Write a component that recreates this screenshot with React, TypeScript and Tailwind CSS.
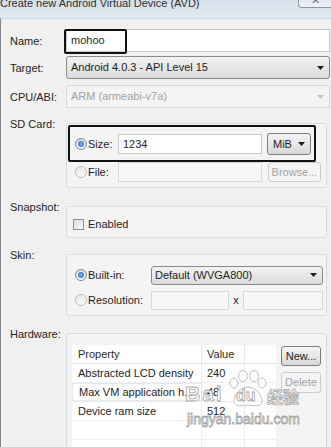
import type { ReactNode } from "react";

function Arrow({ disabled = false }: { disabled?: boolean }) {
    return (
        <svg width="7" height="4" viewBox="0 0 7 4">
            <polygon points="0,0 7,0 3.5,4" fill={disabled ? "#c4c4c4" : "#1e1e1e"} />
        </svg>
    );
}

function Radio({ checked = false }: { checked?: boolean }) {
    return (
        <div
            className={`flex h-[12px] w-[12px] shrink-0 items-center justify-center rounded-full border ${
                checked ? "border-[#7b8894] bg-linear-to-b from-[#dcdcdc] to-[#f9f9f9]" : "border-[#bcbcbc] bg-linear-to-b from-[#e9e9e9] to-[#fbfbfb]"
            }`}
        >
            {checked && <div className="h-[6px] w-[6px] rounded-full bg-radial from-[#7fb6ee] to-[#1b5fb8]" />}
        </div>
    );
}

function Button({ children, disabled = false, className = "" }: { children: ReactNode; disabled?: boolean; className?: string }) {
    return (
        <div
            className={`flex items-center justify-center rounded-[3px] border ${
                disabled
                    ? "border-[#c9cdd0] bg-[#f4f4f4] text-[#a3a3a3]"
                    : "border-[#7c7c7c] bg-linear-to-b from-[#f4f4f4] to-[#d9d9d9] text-[#1e1e1e]"
            } ${className}`}
        >
            {children}
        </div>
    );
}

function Label({ children }: { children: ReactNode }) {
    return <div className="w-[65px] shrink-0 pl-[9px] leading-[14px]">{children}</div>;
}

function Group({ children, className = "" }: { children: ReactNode; className?: string }) {
    return (
        <div className="w-[261px] pt-[6px]">
            <div className={`relative rounded-[3px] border border-[#d6dbe0] bg-[#f4f4f4] ${className}`}>{children}</div>
        </div>
    );
}

const rows = [
    ["Abstracted LCD density", "240"],
    ["Max VM application h...", "48"],
    ["Device ram size", "512"],
    ["", ""],
    ["", ""],
];

const stroke = "text-white [-webkit-text-stroke:0.8px_#9c9c9c]";

export default function App() {
    return (
        <div className="relative h-[447px] w-[331px] overflow-hidden bg-[#f0f0f0] font-['Liberation_Sans',Arial,sans-serif] text-[11px] text-[#1e1e1e]">
            {/* title bar */}
            <div className="flex h-[18px] items-start justify-between overflow-hidden bg-linear-to-b from-[#d6e0eb] to-[#e2e9f1]">
                <span className="-mt-[4px] leading-[14px] text-[#2e2e2e]">Create new Android Virtual Device (AVD)</span>
                <div className="flex h-[8px] w-[33px] justify-center overflow-hidden rounded-bl-[4px] border-b border-l border-[#8c96a2] bg-linear-to-b from-[#e3e9f0] to-[#f1f4f8]">
                    <span className="-mt-[7px] text-[11px] leading-[14px] text-[#66707c]">✕</span>
                </div>
            </div>

            <div className="flex h-[429px] flex-col border-l border-t border-l-[#7f8791] border-t-[#cdd5de]">
                {/* Name */}
                <div className="mt-[10px] flex h-[23px] items-center">
                    <Label>Name:</Label>
                    <div className="relative mr-[1px] flex h-[23px] flex-1 items-center border border-[#c4c9cf] bg-white px-[4px]">
                        mohoo
                        <div className="absolute -left-[3px] -top-[1px] h-[25px] w-[63px] rounded-[2px] border-2 border-[#111]" />
                    </div>
                </div>

                {/* Target */}
                <div className="mt-[4px] flex h-[23px] items-center">
                    <Label>Target:</Label>
                    <div className="mr-[1px] flex h-[23px] flex-1 items-center justify-between rounded-[3px] border border-[#8a8a8a] bg-linear-to-b from-[#f2f2f2] to-[#dcdcdc] pl-[4px] pr-[5px]">
                        <span>Android 4.0.3 - API Level 15</span>
                        <Arrow />
                    </div>
                </div>

                {/* CPU/ABI */}
                <div className="mt-[6px] flex h-[23px] items-center">
                    <Label>CPU/ABI:</Label>
                    <div className="mr-[1px] flex h-[23px] flex-1 items-center justify-between rounded-[2px] border border-[#d9d9d9] bg-[#f4f4f4] pl-[4px] pr-[5px] text-[#a2a2a2]">
                        <span>ARM (armeabi-v7a)</span>
                        <Arrow disabled />
                    </div>
                </div>

                {/* SD Card */}
                <div className="mt-[9px] flex items-start">
                    <Label>SD Card:</Label>
                    <Group className="pb-[5px] pl-[8px] pt-[9px]">
                        <div className="flex h-[22px] items-center">
                            <div className="flex w-[43px] items-center gap-[1px]">
                                <Radio checked />
                                <span>Size:</span>
                            </div>
                            <div className="flex h-[20px] w-[144px] items-center border border-[#c4c9cf] bg-white px-[4px]">1234</div>
                            <Button className="ml-[5px] h-[22px] w-[44px] !justify-between px-[5px]">
                                <span>MiB</span>
                                <Arrow />
                            </Button>
                        </div>
                        <div className="mt-[7px] flex h-[20px] items-center">
                            <div className="flex w-[43px] items-center gap-[1px]">
                                <Radio />
                                <span>File:</span>
                            </div>
                            <div className="h-[20px] w-[144px] border border-[#d6d9dc] bg-[#f7f7f7]" />
                            <Button disabled className="ml-[6px] h-[20px] w-[53px]">
                                Browse...
                            </Button>
                        </div>
                        <div className="absolute left-[1px] top-[1px] h-[37px] w-[248px] rounded-[2px] border-2 border-[#111]" />
                    </Group>
                </div>

                {/* Snapshot */}
                <div className="mt-[12px] flex items-start">
                    <Label>Snapshot:</Label>
                    <Group className="pb-[6px] pl-[6px] pt-[11px]">
                        <div className="flex h-[13px] items-center gap-[4px]">
                            <div className="h-[11px] w-[11px] border border-[#8e8f8f] bg-linear-to-br from-[#dcdcdc] to-[#fafafa]" />
                            <span>Enabled</span>
                        </div>
                    </Group>
                </div>

                {/* Skin */}
                <div className="mt-[10px] flex items-start">
                    <Label>Skin:</Label>
                    <Group className="pb-[5px] pl-[8px] pt-[10px]">
                        <div className="flex h-[20px] items-center">
                            <div className="flex w-[76px] items-center gap-[1px]">
                                <Radio checked />
                                <span>Built-in:</span>
                            </div>
                            <div className="flex h-[19px] w-[172px] items-center justify-between rounded-[3px] border border-[#8a8a8a] bg-linear-to-b from-[#f2f2f2] to-[#dcdcdc] pl-[3px] pr-[5px]">
                                <span>Default (WVGA800)</span>
                                <Arrow />
                            </div>
                        </div>
                        <div className="mt-[5px] flex h-[20px] items-center">
                            <div className="flex w-[76px] items-center gap-[1px]">
                                <Radio />
                                <span>Resolution:</span>
                            </div>
                            <div className="h-[19px] w-[78px] border border-[#d6d9dc] bg-[#f7f7f7]" />
                            <span className="w-[14px] text-center">x</span>
                            <div className="h-[19px] w-[80px] border border-[#d6d9dc] bg-[#f7f7f7]" />
                        </div>
                    </Group>
                </div>

                {/* Hardware */}
                <div className="mt-[11px] flex items-start">
                    <Label>Hardware:</Label>
                    <Group className="flex items-start pl-[5px] pt-[11px]">
                        <div className="w-[204px] bg-white">
                            <div className="flex h-[19px] border-b border-[#e2e2e2] text-[#2a2a2a]">
                                <div className="flex w-[130px] items-center border-r border-[#e6e6e6] pl-[6px]">Property</div>
                                <div className="flex w-[43px] items-center border-r border-[#e6e6e6] pl-[5px]">Value</div>
                                <div className="flex-1" />
                            </div>
                            {rows.map(([k, v], i) => (
                                <div key={i} className="flex h-[19px] border-b border-[#eeeeee]">
                                    <div
                                        className={`flex w-[130px] items-center whitespace-nowrap border-r pl-[6px] ${
                                            i === 1 ? "border border-[#e1e9f2]" : "border-[#ececec]"
                                        }`}
                                    >
                                        {k}
                                    </div>
                                    <div className="flex w-[43px] items-center border-r border-[#ececec] pl-[5px]">{v}</div>
                                    <div className="flex-1" />
                                </div>
                            ))}
                        </div>
                        <div className="ml-[5px] flex flex-col">
                            <Button className="mt-[1px] h-[20px] w-[40px]">New...</Button>
                            <Button disabled className="mt-[6px] h-[21px] w-[40px]">
                                Delete
                            </Button>
                        </div>
                    </Group>
                </div>
            </div>

            {/* jingyan watermark */}
            <div className="pointer-events-none absolute left-[184px] top-[368px] h-[62px] w-[120px] opacity-90">
                <span className={`absolute left-[1px] top-[14px] text-[21px] font-bold leading-[24px] tracking-[2px] ${stroke}`}>Bai</span>
                <svg className="absolute left-[44px] top-[2px]" width="40" height="38" viewBox="0 0 40 38">
                    <g fill="#ffffff" stroke="#a8a8a8" strokeWidth="0.8">
                        <ellipse cx="6" cy="13" rx="4" ry="5" />
                        <ellipse cx="15" cy="6" rx="4.5" ry="5.5" />
                        <ellipse cx="26" cy="6" rx="4.5" ry="5.5" />
                        <ellipse cx="34" cy="13" rx="4" ry="5" />
                        <path d="M20 17 C12 17 5 26 6 32 C7 37 14 36 20 35 C26 36 33 37 34 32 C35 26 28 17 20 17 Z" />
                    </g>
                </svg>
                <span className={`absolute left-[52px] top-[19px] text-[16px] font-bold leading-[18px] ${stroke}`}>du</span>
                <span className={`absolute left-[83px] top-[18px] font-['Noto_Sans_CJK_SC',sans-serif] text-[16px] font-bold leading-[20px] ${stroke}`}>经验</span>
                <span className={`absolute left-[3px] top-[43px] text-[14px] leading-[16px] ${stroke}`}>jingyan.baidu.com</span>
            </div>
        </div>
    );
}
